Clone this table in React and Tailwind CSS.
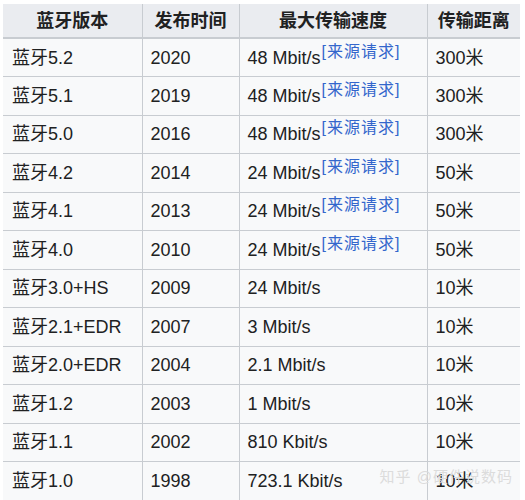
import React from "react";

const rows = [
  ["蓝牙5.2", "2020", "48 Mbit/s", true, "300米"],
  ["蓝牙5.1", "2019", "48 Mbit/s", true, "300米"],
  ["蓝牙5.0", "2016", "48 Mbit/s", true, "300米"],
  ["蓝牙4.2", "2014", "24 Mbit/s", true, "50米"],
  ["蓝牙4.1", "2013", "24 Mbit/s", true, "50米"],
  ["蓝牙4.0", "2010", "24 Mbit/s", true, "50米"],
  ["蓝牙3.0+HS", "2009", "24 Mbit/s", false, "10米"],
  ["蓝牙2.1+EDR", "2007", "3 Mbit/s", false, "10米"],
  ["蓝牙2.0+EDR", "2004", "2.1 Mbit/s", false, "10米"],
  ["蓝牙1.2", "2003", "1 Mbit/s", false, "10米"],
  ["蓝牙1.1", "2002", "810 Kbit/s", false, "10米"],
  ["蓝牙1.0", "1998", "723.1 Kbit/s", false, "10米"],
];

const font = {
  fontFamily: '"Liberation Sans", "Noto Sans CJK SC", sans-serif',
};

export default function App() {
  return (
    <div
      className="relative w-[525px] h-[500px] overflow-hidden bg-white pt-[4px] pl-[3px] text-[#202122]"
      style={font}
    >
      <table className="border-collapse table-fixed w-[517px] text-[18px] leading-none">
        <colgroup>
          <col className="w-[139px]" />
          <col className="w-[97px]" />
          <col className="w-[188px]" />
          <col className="w-[93px]" />
        </colgroup>
        <thead>
          <tr className="bg-[#eaecf0]">
            {["蓝牙版本", "发布时间", "最大传输速度", "传输距离"].map((h) => (
              <th
                key={h}
                className="h-[34px] p-0 font-bold text-center border-x border-[#c8ccd1] first:border-l-0 last:border-r-0 border-b-2 border-b-[#c8ccd1]"
              >
                {h}
              </th>
            ))}
          </tr>
        </thead>
        <tbody>
          {rows.map((r) => (
            <tr key={r[0]} className="bg-[#f8f9fa]">
              <td className="h-[38.5px] p-0 pl-[9px] border border-[#c8ccd1] border-l-0">
                {r[0]}
              </td>
              <td className="p-0 pl-[8px] border border-[#c8ccd1]">{r[1]}</td>
              <td className="p-0 pl-[8px] border border-[#c8ccd1] whitespace-nowrap">
                {r[2]}
                {r[3] && (
                  <sup className="align-baseline relative -top-[7px] text-[16px] tracking-[1px] leading-none text-[#3366cc] ml-[1px]">
                    [来源请求]
                  </sup>
                )}
              </td>
              <td className="p-0 pl-[8px] border border-[#c8ccd1] border-r-0">
                {r[4]}
              </td>
            </tr>
          ))}
        </tbody>
      </table>
      <div className="absolute right-[12px] bottom-[12px] text-[15px] text-[#dcdcdc] tracking-[1px]">
        知乎 @硬件说数码
      </div>
    </div>
  );
}
